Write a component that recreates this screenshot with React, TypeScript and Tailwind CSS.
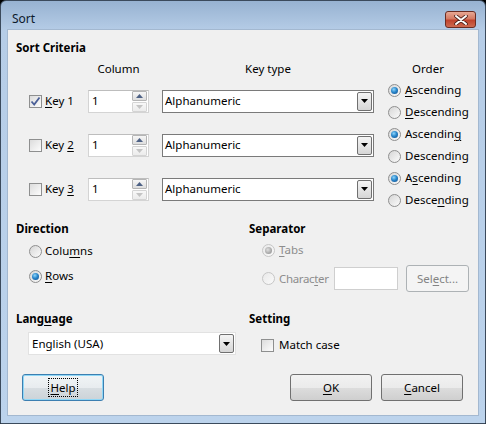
import React from 'react';

const U: React.FC<{ children: React.ReactNode }> = ({ children }) => (
  <span className="underline decoration-1 underline-offset-[2px]">{children}</span>
);

const Radio: React.FC<{ checked?: boolean; disabled?: boolean }> = ({ checked, disabled }) => (
  <div
    className={`w-[13px] h-[13px] shrink-0 rounded-full border flex items-center justify-center ${
      disabled
        ? 'border-[#c6c6c6] bg-[linear-gradient(135deg,#e9e9e9,#fafafa)]'
        : 'border-[#8f8f8f] bg-[linear-gradient(135deg,#d6d6d6,#fbfbfb)]'
    }`}
  >
    {checked && (
      <div
        className={`w-[7px] h-[7px] rounded-full ${
          disabled
            ? 'bg-[radial-gradient(circle_at_40%_40%,#e0e0e0_0%,#a8a8a8_60%,#8e8e8e_100%)]'
            : 'bg-[radial-gradient(circle_at_40%_35%,#8fd6fb_0%,#2a87cb_45%,#0d4787_100%)]'
        }`}
      />
    )}
  </div>
);

const Check: React.FC<{ checked?: boolean }> = ({ checked }) => (
  <div className="w-[13px] h-[13px] shrink-0 border border-[#8e8f8f] bg-[linear-gradient(135deg,#dcdcdc,#fdfdfd)] flex items-center justify-center">
    {checked && (
      <svg width="11" height="11" viewBox="0 0 11 11">
        <path d="M1.5 5.5 L4.2 8.5 L9.5 1.5" fill="none" stroke="#4a5f97" strokeWidth="1.8" />
      </svg>
    )}
  </div>
);

const Spin: React.FC = () => (
  <div className="w-[61px] h-[23px] bg-white border border-[#d4d4d4] border-t-[#bdbdbd] flex items-center pl-[3px] pr-[1px]">
    <span className="flex-1">1</span>
    <div className="flex flex-col w-[15px] h-[21px] gap-[1px]">
      <div className="flex-1 border border-[#b5b5b5] rounded-[1px] bg-[linear-gradient(to_bottom,#f6f6f6,#dedede)] flex items-center justify-center">
        <svg width="7" height="4" viewBox="0 0 7 4">
          <path d="M0 4 L3.5 0 L7 4 Z" fill="#4d6185" />
        </svg>
      </div>
      <div className="flex-1 border border-[#d4d4d4] rounded-[1px] bg-[linear-gradient(to_bottom,#f8f8f8,#ececec)] flex items-center justify-center">
        <svg width="7" height="4" viewBox="0 0 7 4">
          <path d="M0 0 L7 0 L3.5 4 Z" fill="#c4c4c4" />
        </svg>
      </div>
    </div>
  </div>
);

const Combo: React.FC<{ value: string; className: string }> = ({ value, className }) => (
  <div className={`h-[23px] bg-white border flex items-center pl-[2px] pr-[1px] ${className}`}>
    <span className="flex-1">{value}</span>
    <div className="w-[15px] h-[19px] border border-[#707070] rounded-[2px] bg-[linear-gradient(to_bottom,#f4f4f4,#d6d6d6)] flex items-center justify-center">
      <svg width="7" height="4" viewBox="0 0 7 4">
        <path d="M0 0 L7 0 L3.5 4 Z" fill="#000" />
      </svg>
    </div>
  </div>
);

const Btn: React.FC<{ children: React.ReactNode; focus?: boolean; disabled?: boolean; className?: string }> = ({
  children,
  focus,
  disabled,
  className = '',
}) => (
  <div
    className={`h-[27px] rounded-[3px] border flex items-center justify-center ${
      disabled
        ? 'h-[23px] border-[#adb2b5] bg-[#f4f4f4] text-[#838383]'
        : focus
        ? 'border-[#3c7fb1] shadow-[inset_0_0_0_1px_#8fd7f6] bg-[linear-gradient(to_bottom,#f0f4f6_0%,#e8ecef_50%,#d8dee2_50%,#ccd3d8_100%)]'
        : 'border-[#707070] bg-[linear-gradient(to_bottom,#f2f2f2_0%,#ebebeb_50%,#dddddd_50%,#cfcfcf_100%)]'
    } ${className}`}
  >
    {children}
  </div>
);

const rows = [
  {
    checked: true,
    key: <><U>K</U>ey 1</>,
    asc: <><U>A</U>scending</>,
    desc: <><U>D</U>escending</>,
  },
  {
    checked: false,
    key: <>Key <U>2</U></>,
    asc: <>Ascendin<U>g</U></>,
    desc: <>Descend<U>i</U>ng</>,
  },
  {
    checked: false,
    key: <>Key <U>3</U></>,
    asc: <>A<U>s</U>cending</>,
    desc: <>Desce<U>n</U>ding</>,
  },
];

export default function App() {
  return (
    <div className="w-[486px] h-[424px] bg-black font-['Noto_Sans',sans-serif] text-[11.5px] text-black leading-[16px]">
      <div className="w-full h-full rounded-t-[6px] border border-[#3b4a5c] bg-[linear-gradient(to_bottom,#97b2d1_0px,#b6cde7_30px,#bcd3ec_100%)] flex flex-col">
        {/* Title bar */}
        <div className="h-[29px] flex items-start justify-between pt-[10px] pl-[11px] pr-[9px]">
          <span className="text-[12px] text-[#0c1a2c]">Sort</span>
          <div className="w-[31px] h-[17px] rounded-[3px] border border-[#6a2c22] bg-[linear-gradient(to_bottom,#e7a894_0%,#d47a63_45%,#c0432c_55%,#cd6a50_100%)] flex items-center justify-center">
            <svg width="14" height="10" viewBox="0 0 14 10">
              <path d="M2 1 L12 9 M12 1 L2 9" stroke="#4a2019" strokeWidth="3.6" strokeLinecap="round" />
              <path d="M2 1 L12 9 M12 1 L2 9" stroke="#ffffff" strokeWidth="2" strokeLinecap="round" />
            </svg>
          </div>
        </div>

        {/* Content */}
        <div className="mx-[7px] h-[385px] bg-[#f0f0f0] shadow-[0_0_0_1px_#a3b8d0] flex flex-col pl-[8px] pt-[10px]">
          <div className="h-[16px] font-bold">Sort Criteria</div>

          <div className="mt-[5px] h-[16px] flex">
            <div className="w-[72px]" />
            <div className="w-[61px] text-center">Column</div>
            <div className="w-[13px]" />
            <div className="w-[212px] text-center">Key type</div>
            <div className="w-[14px]" />
            <div className="w-[80px] text-center">Order</div>
          </div>

          <div className="mt-[2px] flex flex-col">
            {rows.map((r, i) => (
              <div key={i} className="h-[44px] flex items-center pl-[13px]">
                <Check checked={r.checked} />
                <div className="w-[43px] ml-[3px]">{r.key}</div>
                <Spin />
                <Combo value="Alphanumeric" className="ml-[13px] w-[212px] border-[#7a7a7a]" />
                <div className="ml-[14px] w-[80px] flex flex-col">
                  <div className="h-[22px] flex items-center gap-[4px]">
                    <Radio checked />
                    <span>{r.asc}</span>
                  </div>
                  <div className="h-[22px] flex items-center gap-[4px]">
                    <Radio />
                    <span>{r.desc}</span>
                  </div>
                </div>
              </div>
            ))}
          </div>

          {/* Direction / Separator */}
          <div className="mt-[10px] h-[70px] flex">
            <div className="w-[233px] flex flex-col">
              <div className="h-[16px] font-bold">Direction</div>
              <div className="mt-[4px] h-[20px] pl-[13px] flex items-center gap-[3px]">
                <Radio />
                <span>Colu<U>m</U>ns</span>
              </div>
              <div className="mt-[5px] h-[20px] pl-[13px] flex items-center gap-[3px]">
                <Radio checked />
                <span><U>R</U>ows</span>
              </div>
            </div>
            <div className="flex flex-col">
              <div className="h-[16px] font-bold">Separator</div>
              <div className="mt-[3px] h-[20px] pl-[13px] flex items-center gap-[4px] text-[#8d8d8d]">
                <Radio checked disabled />
                <span><U>T</U>abs</span>
              </div>
              <div className="mt-[7px] h-[23px] pl-[13px] flex items-center text-[#8d8d8d]">
                <Radio disabled />
                <span className="ml-[4px] w-[55px] tracking-[-0.35px] whitespace-nowrap">Charac<U>t</U>er</span>
                <div className="w-[64px] h-[23px] bg-white border border-[#cfcfcf]" />
                <Btn disabled className="ml-[8px] w-[63px]">Sel<U>e</U>ct...</Btn>
              </div>
            </div>
          </div>

          {/* Language / Setting */}
          <div className="mt-[20px] h-[44px] flex">
            <div className="w-[233px] flex flex-col">
              <div className="h-[16px] font-bold">Lang<U>u</U>age</div>
              <Combo value="English (USA)" className="mt-[5px] ml-[12px] w-[208px] border-[#e2e2e2] pl-[3px]" />
            </div>
            <div className="flex flex-col">
              <div className="h-[16px] font-bold">Setting</div>
              <div className="mt-[8px] h-[20px] pl-[12px] flex items-center gap-[5px]">
                <Check />
                <span>Match case</span>
              </div>
            </div>
          </div>

          {/* Buttons */}
          <div className="mt-[19px] flex pl-[6px] pr-[15px]">
            <Btn focus className="w-[82px]">
              <span className="px-[1px] outline outline-1 outline-dotted outline-black leading-[17px]">
                <U>H</U>elp
              </span>
            </Btn>
            <div className="flex-1" />
            <Btn className="w-[82px]"><span><U>O</U>K</span></Btn>
            <Btn className="w-[82px] ml-[9px]"><span><U>C</U>ancel</span></Btn>
          </div>
        </div>
      </div>
    </div>
  );
}
